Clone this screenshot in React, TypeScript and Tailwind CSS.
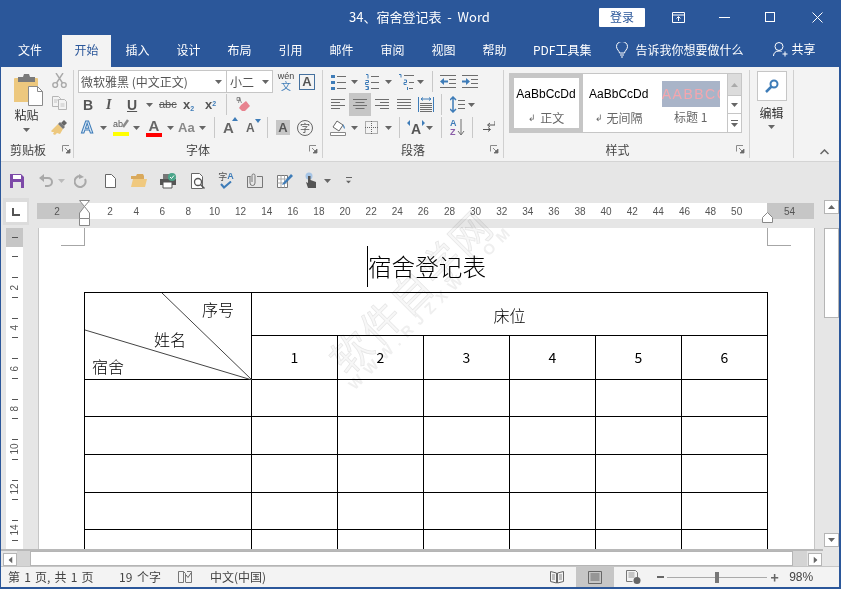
import type { ReactNode } from 'react'

const BLUE = '#3e7cb8'
const GR = '#6e6e6e'

function Caret({ className = '', color = '#666' }: { className?: string; color?: string }) {
  return (
    <svg width="7" height="4" viewBox="0 0 7 4" className={`shrink-0 ${className}`}>
      <path d="M0 0h7L3.5 4z" fill={color} />
    </svg>
  )
}

function Divider({ className = '' }: { className?: string }) {
  return <div className={`h-[21px] w-px shrink-0 bg-[#c8c8c8] ${className}`} />
}

function Launcher({ className = '' }: { className?: string }) {
  return (
    <svg width="9" height="9" viewBox="0 0 9 9" className={`absolute bottom-[4px] ${className}`}>
      <path d="M0.5 6.5V0.5H7" fill="none" stroke="#8a8a8a" />
      <path d="M3 3l4 4M8 4v4H4z" fill="#6a6a6a" stroke="#6a6a6a" strokeWidth="0.8" />
    </svg>
  )
}

function Ico({ w, h = 16, className = '', children }: { w: number; h?: number; className?: string; children: ReactNode }) {
  return (
    <svg width={w} height={h} viewBox={`0 0 ${w} ${h}`} className={`shrink-0 ${className}`} fill="none">
      {children}
    </svg>
  )
}

function BulletIcon() {
  return (
    <Ico w={15} h={16} className="ml-[8px]">
      <path d="M0 1h4v3H0zM0 7h4v3H0zM0 13h4v3H0z" fill={BLUE} />
      <path d="M6 2.5h9M6 8.5h9M6 14.5h9" stroke={GR} />
    </Ico>
  )
}

function NumberIcon() {
  return (
    <Ico w={14} h={16} className="ml-[7px]">
      <path d="M1 0.5h2v4M0.5 6.5h3v2h-3v2h3M0.5 12.5h3v3h-3M2 14h1" stroke={BLUE} strokeWidth="1" />
      <path d="M6 2.5h8M6 8.5h8M6 14.5h8" stroke={GR} />
    </Ico>
  )
}

function MultiIcon() {
  return (
    <Ico w={16} h={16} className="ml-[6px]">
      <path d="M1 0.5h2v3M6 6h2.5v2.5H6v2h2.5M9.5 13v3" stroke={BLUE} />
      <path d="M6 1.5h10M11 8.5h5M11 14.5h4" stroke={GR} />
    </Ico>
  )
}

function IndentIcon({ out, className = '' }: { out?: boolean; className?: string }) {
  return (
    <Ico w={16} h={14} className={className}>
      <path d="M0 0.5h16M9 4.5h7M9 8.5h7M0 12.5h16" stroke={GR} />
      {out ? <path d="M0 6.5l4-3.5v2.5h4v2H4v2.5z" fill={BLUE} /> : <path d="M8 6.5L4 3v2.5H0v2h4V10z" fill={BLUE} />}
    </Ico>
  )
}

function AlignIcon({ lines, className = '' }: { lines: string; className?: string }) {
  return (
    <Ico w={14} h={11} className={className}>
      <path d={lines} stroke={GR} />
    </Ico>
  )
}

function ARaise({ up, small, className = '' }: { up?: boolean; small?: boolean; className?: string }) {
  return (
    <span className={`relative flex w-[14px] shrink-0 items-end justify-start font-['Liberation_Sans',sans-serif] font-bold leading-none text-[#666] ${small ? 'text-[12px]' : 'text-[15px]'} ${className}`}>
      A
      <svg width="6" height="4" viewBox="0 0 6 4" className="absolute right-[-1px] top-[-3px]">
        <path d={up ? 'M0 4h6L3 0z' : 'M0 0h6L3 4z'} fill={BLUE} />
      </svg>
    </span>
  )
}

function Clipboard() {
  return (
    <Ico w={29} h={32}>
      <path d="M0 5a1 1 0 0 1 1-1h22a1 1 0 0 1 1 1v23H0z" fill="#edc87e" />
      <path d="M4 3h5l1-3h5l1 3h5v5H4z" fill="#7a7a7a" />
      <path d="M14.5 12.5h9l5 5v14h-14z" fill="#fff" stroke="#8a8a8a" />
      <path d="M23.5 12.5v5h5" stroke="#8a8a8a" />
    </Ico>
  )
}

function Scissors() {
  return (
    <Ico w={15} h={15}>
      <circle cx="3.2" cy="12" r="2.4" stroke="#a9a9a9" strokeWidth="1.4" />
      <circle cx="11.8" cy="12" r="2.4" stroke="#a9a9a9" strokeWidth="1.4" />
      <path d="M4.5 10L11 0M10.5 10L4 0" stroke="#a9a9a9" strokeWidth="1.4" />
    </Ico>
  )
}

function CopyIcon() {
  return (
    <Ico w={15} h={14}>
      <path d="M0.5 0.5h6l2 2v8h-8z" fill="#f3f3f3" stroke="#b5b5b5" />
      <path d="M6.5 3.5h6l2 2v8h-8z" fill="#f3f3f3" stroke="#b5b5b5" />
      <path d="M2 4h4M2 6h3M8.5 8h4M8.5 10h4" stroke="#c4c4c4" />
    </Ico>
  )
}

function Brush() {
  return (
    <Ico w={16} h={15}>
      <path d="M0 11L7 4l5 5-3 5-3-1-2 2-2-1 1-2-2 0z" fill="#edc87e" />
      <path d="M7 4l2-2 5 5-2 2z" fill="#777" />
      <path d="M10 3l3-3 3 3-3 3z" fill="#666" />
    </Ico>
  )
}

const rulerNumbers = Array.from({ length: 25 }, (_, i) => (i + 1) * 2)
const vRulerNumbers = [2, 4, 6, 8, 10, 12, 14]

function RibbonLabel({ children, className = '' }: { children: ReactNode; className?: string }) {
  return <div className={`pt-[3px] text-center text-[12px] leading-[16px] text-[#444] ${className}`}>{children}</div>
}

function Ribbon() {
  return (
    <div className="flex h-[94px] shrink-0 bg-[#f3f3f3] pt-[3px]">
      {/* clipboard */}
      <div className="relative flex h-[88px] w-[73px] shrink-0 flex-col border-r border-[#d0d0d0]">
        <div className="flex h-[69px]">
          <div className="ml-[2px] flex w-[47px] flex-col items-center pt-[4px]">
            <div className="ml-[3px]"><Clipboard /></div>
            <span className="text-[12px] leading-[18px] text-[#333]">粘贴</span>
            <Caret className="mt-[4px]" />
          </div>
          <div className="flex w-[18px] flex-col items-center gap-[8px] pt-[3px]">
            <Scissors />
            <CopyIcon />
            <div className="mt-[2px]"><Brush /></div>
          </div>
        </div>
        <RibbonLabel className="pr-[18px]">剪贴板</RibbonLabel>
        <Launcher className="left-[61px]" />
      </div>

      {/* font */}
      <div className="relative flex h-[88px] w-[249px] shrink-0 flex-col border-r border-[#d0d0d0]">
        <div className="flex h-[23px] items-center">
          <div className="ml-[4px] flex h-[23px] w-[195px] border border-[#c6c6c6] bg-white text-[12px] text-[#555]">
            <div className="flex w-[148px] items-center justify-between border-r border-[#c6c6c6] pl-[2px] pr-[4px]">
              <span>微软雅黑 (中文正文)</span>
              <Caret />
            </div>
            <div className="flex flex-1 items-center justify-between pl-[3px] pr-[3px]">
              <span>小二</span>
              <Caret />
            </div>
          </div>
          <div className="ml-[5px] flex w-[16px] flex-col items-center text-[9px] leading-[9px] text-[#444]">
            <span className="font-['Liberation_Sans',sans-serif]">wén</span>
            <span className="text-[10px] leading-[10px] text-[#3e7cb8]">文</span>
          </div>
          <div className="ml-[5px] flex h-[16px] w-[16px] items-center justify-center border border-[#44709e] font-['Liberation_Sans',sans-serif] text-[13px] font-bold leading-none text-[#555]">A</div>
        </div>

        <div className="flex h-[23px] items-center font-['Liberation_Sans',sans-serif] text-[#555]">
          <span className="ml-[9px] w-[10px] text-[14px] font-bold leading-none">B</span>
          <span className="ml-[13px] w-[8px] font-['Liberation_Serif',serif] text-[14px] font-bold italic leading-none">I</span>
          <span className="ml-[13px] w-[10px] text-[14px] font-bold leading-none underline">U</span>
          <Caret className="ml-[9px]" />
          <span className="ml-[6px] w-[16px] text-[11px] leading-none line-through">abc</span>
          <span className="ml-[8px] w-[12px] text-[13px] font-bold leading-none">x<sub className="text-[7px] text-[#3e7cb8]">2</sub></span>
          <span className="ml-[10px] w-[12px] text-[13px] font-bold leading-none">x<sup className="text-[7px] text-[#3e7cb8]">2</sup></span>
          <Divider className="ml-[9px]" />
          <Ico w={14} h={16} className="ml-[9px]">
            <path d="M5 8l5-4 4 5-5 5H6l-3-3z" fill="#e8838f" />
            <path d="M1 0.5h3v3H1zM2.5 6l1-5 2 5" stroke="#777" strokeWidth="0.8" />
          </Ico>
        </div>

        <div className="flex h-[23px] items-center font-['Liberation_Sans',sans-serif] text-[#666]">
          <span className="ml-[7px] w-[16px] text-[17px] font-bold leading-none text-[#dce9f6] [-webkit-text-stroke:1px_#3e7cb8]">A</span>
          <Caret className="ml-[3px]" />
          <div className="ml-[6px] flex w-[16px] flex-col">
            <div className="flex h-[13px] items-start">
              <span className="text-[9px] leading-[10px] text-[#555]">ab</span>
              <Ico w={7} h={11} className="ml-[-1px]">
                <path d="M1 8L6 1" stroke="#8a8a8a" strokeWidth="2.500" />
              </Ico>
            </div>
            <div className="h-[4px] w-[16px] bg-[#ffff00]" />
          </div>
          <Caret className="ml-[4px]" />
          <div className="ml-[6px] flex w-[16px] flex-col items-center">
            <span className="text-[15px] font-bold leading-[13px] text-[#666]">A</span>
            <div className="mt-[1px] h-[4px] w-[16px] bg-[#ff0000]" />
          </div>
          <Caret className="ml-[5px]" />
          <span className="ml-[4px] w-[20px] text-[13px] font-bold leading-none text-[#888]">Aa</span>
          <Caret className="ml-px" />
          <Divider className="ml-[8px]" />
          <ARaise up className="ml-[8px]" />
          <ARaise small className="ml-[9px]" />
          <Divider className="ml-[7px]" />
          <span className="ml-[8px] flex h-[15px] w-[14px] items-center justify-center bg-[#c6c6c6] text-[13px] font-bold leading-none text-[#555]">A</span>
          <span className="ml-[7px] flex h-[16px] w-[16px] items-center justify-center rounded-full border border-[#666] font-['Noto_Sans_CJK_SC',sans-serif] text-[10px] leading-none text-[#555]">字</span>
        </div>
        <RibbonLabel>字体</RibbonLabel>
        <Launcher className="right-[4px]" />
      </div>

      {/* paragraph */}
      <div className="relative flex h-[88px] w-[181px] shrink-0 flex-col border-r border-[#d0d0d0]">
        <div className="flex h-[23px] items-center">
          <BulletIcon />
          <Caret className="ml-[5px]" />
          <NumberIcon />
          <Caret className="ml-[6px]" />
          <MultiIcon />
          <Caret className="ml-[3px]" />
          <Divider className="ml-[8px]" />
          <IndentIcon out className="ml-[7px]" />
          <IndentIcon className="ml-[6px]" />
        </div>
        <div className="flex h-[23px] items-center">
          <AlignIcon lines="M0 .5h14M0 3.5h9M0 6.5h14M0 9.5h9" className="ml-[8px]" />
          <div className="ml-[4px] flex h-[23px] w-[22px] items-center justify-center bg-[#c6c6c6]">
            <AlignIcon lines="M0 .5h14M2.5 3.5h9M0 6.5h14M2.5 9.5h9" />
          </div>
          <AlignIcon lines="M0 .5h14M5 3.5h9M0 6.5h14M5 9.5h9" className="ml-[4px]" />
          <AlignIcon lines="M0 .5h14M0 3.5h14M0 6.5h14M0 9.5h14" className="ml-[8px]" />
          <Ico w={16} h={15} className="ml-[7px]">
            <path d="M0.5 0v15M15.5 0v15" stroke={BLUE} />
            <path d="M3 2h10M5 0.5L3 2l2 1.5M11 0.5L13 2l-2 1.5" stroke={BLUE} />
            <path d="M2 6.5h12M2 8.5h12M2 10.5h12M2 12.5h12M2 14.5h12" stroke={GR} />
          </Ico>
          <Divider className="ml-[7px]" />
          <Ico w={15} h={17} className="ml-[8px]">
            <path d="M3 1v15M0 4l3-3 3 3M0 13l3 3 3-3" stroke={BLUE} strokeWidth="1.5" />
            <path d="M8 4.5h7M8 8.5h7M8 12.5h7" stroke={GR} />
          </Ico>
          <Caret className="ml-[3px]" />
        </div>
        <div className="flex h-[23px] items-center">
          <Ico w={16} h={17} className="ml-[7px]">
            <path d="M3 8l4-6 6 4-4 6z" fill="#fff" stroke="#666" />
            <path d="M13 5c1 2 2.500 3 1.500 5-.8-1-1.500-2-1.500-5z" fill={BLUE} />
            <path d="M0.500 13.500h15v3h-15z" fill="#fff" stroke="#888" />
          </Ico>
          <Caret className="ml-[5px]" />
          <Ico w={13} h={13} className="ml-[7px]">
            <path d="M0.500 0.500h12v12h-12zM6.500 0v13M0 6.500h13" stroke="#666" strokeDasharray="1 1" />
          </Ico>
          <Caret className="ml-[7px]" />
          <Divider className="ml-[7px]" />
          <div className="relative ml-[7px] flex h-[16px] w-[18px] shrink-0 items-end justify-center font-['Liberation_Sans',sans-serif] text-[14px] font-bold leading-none text-[#555]">
            A
            <svg width="18" height="6" viewBox="0 0 18 6" className="absolute left-0 top-0">
              <path d="M0 3l3-3v6zM18 3l-3-3v6z" fill={BLUE} />
            </svg>
          </div>
          <Caret className="ml-px" />
          <Divider className="ml-[8px]" />
          <div className="ml-[8px] flex w-[16px] shrink-0 items-center">
            <div className="flex flex-col font-['Liberation_Sans',sans-serif] text-[9px] font-bold leading-[9px]">
              <span className="text-[#3e7cb8]">A</span>
              <span className="text-[#8a5ca8]">Z</span>
            </div>
            <Ico w={8} h={17}>
              <path d="M4 0v15M1 12l3 4 3-4" stroke={GR} />
            </Ico>
          </div>
          <Divider className="ml-[6px]" />
          <Ico w={12} h={13} className="ml-[10px]">
            <path d="M12 0v4H5M7 2L4.500 4 7 6" stroke="#555" />
            <path d="M0 8.500h7M5 6.500l2.500 2L5 10.500" stroke="#555" />
          </Ico>
        </div>
        <RibbonLabel>段落</RibbonLabel>
        <Launcher className="right-[4px]" />
      </div>

      {/* styles */}
      <div className="relative flex h-[88px] w-[246px] shrink-0 flex-col border-r border-[#d0d0d0]">
        <div className="h-[69px] pl-[5px] pt-[3px]">
          <div className="flex h-[60px] w-[233px] border border-[#c6c6c6] bg-white text-[#666]">
            <div className="flex w-[73px] flex-col items-center overflow-hidden border-[4px] border-[#c6c6c6] bg-white">
              <span className="mt-[9px] w-[60px] overflow-hidden whitespace-nowrap font-['Liberation_Sans',sans-serif] text-[12px] leading-[14px] text-black">AaBbCcDdE</span>
              <span className="mt-[9px] flex items-center gap-[4px] text-[12px] leading-[16px]"><span className="text-[9px]">↲</span>正文</span>
            </div>
            <div className="flex w-[72px] flex-col items-center overflow-hidden">
              <span className="mt-[13px] w-[59px] overflow-hidden whitespace-nowrap font-['Liberation_Sans',sans-serif] text-[12px] leading-[14px] text-black">AaBbCcDdE</span>
              <span className="mt-[9px] flex items-center gap-[4px] text-[12px] leading-[16px]"><span className="text-[9px]">↲</span>无间隔</span>
            </div>
            <div className="flex w-[73px] flex-col items-center overflow-hidden">
              <span className="mt-[7px] flex h-[26px] w-[58px] items-center overflow-hidden whitespace-nowrap bg-[#a9b4c8] font-['Liberation_Sans',sans-serif] text-[14px] tracking-[1.5px] text-[#f4a6ae]">AABBCCI</span>
              <span className="mt-[2px] text-[12px] leading-[16px]">标题 1</span>
            </div>
            <div className="flex w-[14px] flex-col border-l border-[#c6c6c6]">
              <div className="flex h-[21px] items-center justify-center bg-[#dcdcdc]"><Caret className="rotate-180" color="#aaa" /></div>
              <div className="flex h-[19px] items-center justify-center border-y border-[#c6c6c6]"><Caret /></div>
              <div className="flex flex-1 flex-col items-center justify-center gap-[2px]"><div className="h-px w-[7px] bg-[#666]" /><Caret /></div>
            </div>
          </div>
        </div>
        <RibbonLabel className="pr-[18px]">样式</RibbonLabel>
        <Launcher className="right-[4px]" />
      </div>

      {/* edit */}
      <div className="flex h-[88px] w-[44px] shrink-0 flex-col items-center border-r border-[#d0d0d0]">
        <div className="mt-px flex h-[30px] w-[30px] items-center justify-center border border-[#c6c6c6] bg-white">
          <Ico w={14} h={14}>
            <circle cx="9" cy="5" r="3.500" stroke={BLUE} strokeWidth="2" />
            <path d="M6.500 7.500L1 13" stroke={BLUE} strokeWidth="2.500" />
          </Ico>
        </div>
        <span className="mt-[4px] text-[12px] leading-[16px] text-[#333]">编辑</span>
        <Caret className="mt-[4px]" />
      </div>

      <div className="flex h-[88px] flex-1 items-end justify-end pb-[3px] pr-[10px]">
        <Ico w={9} h={6}>
          <path d="M0.500 5L4.500 1l4 4" stroke="#666" strokeWidth="1.500" />
        </Ico>
      </div>
    </div>
  )
}

function QuickAccess() {
  return (
    <div className="flex h-[38px] shrink-0 items-center border-t border-[#d4d4d4] bg-[#e6e6e6] pl-[9px]">
      <Ico w={14} h={14}>
        <path d="M0 0h11l3 3v11H0z" fill="#7d4aa8" />
        <path d="M3 1h8v4H3z" fill="#fff" />
        <path d="M3 8h8v6H3z" fill="#e6e6e6" />
      </Ico>
      <Ico w={14} h={13} className="ml-[15px]">
        <path d="M1 4h8a4 4 0 0 1 0 8H6" stroke="#a9a9a9" strokeWidth="2" />
        <path d="M5 0L0 4l5 4z" fill="#a9a9a9" />
      </Ico>
      <Caret className="ml-[5px]" color="#bbb" />
      <Ico w={14} h={14} className="ml-[9px]">
        <path d="M11 5a5.500 5.500 0 1 1-5-3" stroke="#a9a9a9" strokeWidth="2" />
        <path d="M5 0v5l5-2z" fill="#a9a9a9" />
      </Ico>
      <Ico w={11} h={14} className="ml-[17px]">
        <path d="M.500.500h6l4 4v9h-10z" fill="#fff" stroke="#666" />
      </Ico>
      <Ico w={16} h={13} className="ml-[15px]">
        <path d="M0 2h5l1-2h6l1 2v3H0z" fill="#d9a95c" />
        <path d="M0 13l2-8h14l-2 8z" fill="#f0c97f" />
      </Ico>
      <Ico w={16} h={16} className="ml-[13px]">
        <path d="M0 6h16v6H0z" fill="#555" />
        <path d="M3 9h9v6H3z" fill="#fff" stroke="#555" />
        <path d="M3 1h6v5H3z" fill="#777" />
        <circle cx="12" cy="4" r="4" fill="#4ba58a" />
        <path d="M10 4l1.500 1.500L14 2.500" stroke="#fff" />
      </Ico>
      <Ico w={14} h={16} className="ml-[15px]">
        <path d="M.500.500h8l3 3v12h-11z" fill="#fff" stroke="#666" />
        <circle cx="7" cy="9" r="3.500" stroke="#555" strokeWidth="1.300" />
        <path d="M9.500 11.500L13.500 15.500" stroke="#555" strokeWidth="1.500" />
      </Ico>
      <div className="ml-[13px] flex w-[16px] shrink-0 flex-col items-center">
        <div className="flex text-[9px] leading-[9px] text-[#555]">
          <span>字</span>
          <span className="font-['Liberation_Sans',sans-serif] font-bold text-[#3e7cb8]">A</span>
        </div>
        <Ico w={16} h={8}>
          <path d="M3 3l3 3.500L13 .500" stroke={BLUE} strokeWidth="2" />
        </Ico>
      </div>
      <Ico w={16} h={15} className="ml-[13px]">
        <path d="M0.500 3.500h3M10 3.500h5.500v11H.500v-11" stroke="#777" />
        <path d="M5 9V2.500a1.500 1.500 0 0 1 3 0V10a2.500 2.500 0 0 1-5 0V3" stroke="#777" />
      </Ico>
      <Ico w={16} h={15} className="ml-[14px]">
        <path d="M.500 2.500h10v12h-10z" fill="#fff" stroke="#777" />
        <path d="M.500 6h10M.500 10h10M4 2.500v12M7.500 2.500v12" stroke="#aaa" />
        <path d="M6 10L14 1l2 2-8 8-3 1z" fill={BLUE} />
      </Ico>
      <Ico w={13} h={17} className="ml-[11px]">
        <circle cx="5" cy="4" r="3.500" fill="#a6c5e6" />
        <path d="M4 4v7l-2-1 2 6h8v-6L6.500 8V4z" fill="#555" />
      </Ico>
      <Caret className="ml-[7px]" />
      <div className="ml-[14px] flex flex-col items-center gap-[2px]">
        <div className="h-px w-[6px] bg-[#666]" />
        <Caret className="scale-75" />
      </div>
    </div>
  )
}

function HRuler() {
  return (
    <div className="relative flex h-[29px] shrink-0 items-start bg-[#e6e6e6] text-[10px] text-[#555]">
      <div className="ml-[2px] mt-[-1px] flex h-[27px] w-[26px] items-center justify-center bg-[#dcdcdc]">
        <div className="flex h-[20px] w-[21px] items-center justify-center bg-white">
          <div className="h-[8px] w-[8px] border-b-2 border-l-2 border-[#555]" />
        </div>
      </div>
      <div className="ml-[8px] mt-[4px] flex h-[16px] font-['Liberation_Sans',sans-serif]">
        <div className="flex w-[47px] items-center justify-center bg-[#c6c6c6] pr-[7px]">2</div>
        <div className="flex w-[683px] items-center bg-white pl-[13px]">
          {rulerNumbers.map((n) => (
            <span key={n} className="w-[26.12px] shrink-0 text-center">{n}</span>
          ))}
        </div>
        <div className="flex w-[47px] items-center justify-center bg-[#c6c6c6] pr-[2px]">54</div>
      </div>
      {/* indent markers */}
      <svg width="12" height="28" viewBox="0 0 12 28" className="absolute left-[78px] top-[1px]">
        <path d="M.500.500h10L5.500 6.500l5 6.500v5.500h-10V13l5-6.500z" fill="#fff" stroke="#888" />
        <path d="M.500 18.500h10v7h-10z" fill="#fff" stroke="#888" />
      </svg>
      <svg width="12" height="11" viewBox="0 0 12 11" className="absolute left-[761px] top-[13px]">
        <path d="M.500 5.500l5-5 5 5v5h-10z" fill="#fff" stroke="#888" />
      </svg>
    </div>
  )
}

function VRuler() {
  return (
    <div className="ml-[5px] flex h-full w-[17px] shrink-0 flex-col items-center overflow-hidden bg-white font-['Liberation_Sans',sans-serif] text-[10px] text-[#555]">
      <div className="flex h-[19px] w-full shrink-0 items-center justify-center bg-[#c6c6c6]">
        <div className="h-px w-[6px] bg-[#555]" />
      </div>
      <div className="mt-[9px] h-px w-[6px] shrink-0 bg-[#555]" />
      {vRulerNumbers.map((n) => (
        <div key={n} className="flex h-[40.5px] shrink-0 flex-col items-center">
          <div className="mt-[20px] h-px w-[6px] bg-[#555]" />
          <span className="flex h-[19px] rotate-180 items-center justify-center leading-none [writing-mode:vertical-rl]">{n}</span>
          <div className="h-px w-[6px] bg-[#555]" />
        </div>
      ))}
    </div>
  )
}

function DocTable() {
  const rows = ['h-[37px]', 'h-[38px]', 'h-[38px]', 'h-[37px]', 'h-[38px]']
  return (
    <table className="w-[683px] table-fixed border-collapse text-black">
      <colgroup>
        <col className="w-[167px]" />
        <col className="w-[86px]" />
        <col className="w-[86px]" />
        <col className="w-[86px]" />
        <col className="w-[86px]" />
        <col className="w-[86px]" />
        <col className="w-[86px]" />
      </colgroup>
      <tbody>
        <tr className="h-[43px]">
          <td rowSpan={2} className="relative border border-black p-0">
            <svg width="167" height="87" viewBox="0 0 167 87" className="absolute left-0 top-0">
              <path d="M77 0L167 87M0 37L167 87" stroke="#444" />
            </svg>
            <span className="absolute left-[117px] top-[5px] text-[16px] font-light leading-[22px]">序号</span>
            <span className="absolute left-[69px] top-[35px] text-[16px] font-light leading-[22px]">姓名</span>
            <span className="absolute left-[7px] top-[62px] text-[16px] font-light leading-[22px]">宿舍</span>
          </td>
          <td colSpan={6} className="border border-black p-0 pt-[2px] text-center text-[16px] font-light">床位</td>
        </tr>
        <tr className="h-[44px]">
          {[1, 2, 3, 4, 5, 6].map((n) => (
            <td key={n} className="border border-black p-0 text-center text-[14px]">{n}</td>
          ))}
        </tr>
        {rows.map((h, i) => (
          <tr key={i} className={h}>
            {[0, 1, 2, 3, 4, 5, 6].map((c) => (
              <td key={c} className="border border-black p-0" />
            ))}
          </tr>
        ))}
      </tbody>
    </table>
  )
}

function Page() {
  return (
    <div className="relative ml-[15px] h-full w-[777px] shrink-0 overflow-hidden border-x border-[#c6c6c6] bg-white">
      <div className="absolute left-[22px] top-0 h-[18px] w-[24px] border-b border-r border-[#a6a6a6]" />
      <div className="absolute left-[728px] top-0 h-[18px] w-[24px] border-b border-l border-[#a6a6a6]" />
      <div className="flex flex-col pl-[45px] pt-[18px]">
        <div className="flex h-[41px] w-[683px] justify-center">
          <span className="ml-[2px] flex h-[41px] items-center border-l border-black text-[23.6px] font-light leading-none text-black">宿舍登记表</span>
        </div>
        <div className="mt-[5px]">
          <DocTable />
        </div>
      </div>
    </div>
  )
}

function VScroll() {
  return (
    <div className="ml-[9px] flex h-full w-[15px] shrink-0 flex-col bg-[#e6e6e6] pt-px">
      <div className="flex h-[14px] items-center justify-center border border-[#b5b5b5] bg-white"><Caret className="rotate-180" /></div>
      <div className="mt-[14px] h-[90px] border border-[#b5b5b5] bg-white" />
      <div className="flex-1" />
      <div className="mb-[2px] flex h-[14px] items-center justify-center border border-[#b5b5b5] bg-white"><Caret /></div>
    </div>
  )
}

function HScroll() {
  return (
    <div className="h-[17px] shrink-0 bg-[#e6e6e6]">
      <div className="flex h-[17px] w-[822px] items-start border-t-2 border-[#b8b8b8]">
        <div className="ml-[2px] mt-[2px] flex h-[13px] w-[14px] items-center justify-center border border-[#b5b5b5] bg-white">
          <Caret className="rotate-90" />
        </div>
        <div className="h-[15px] w-[13px] bg-[#d4d4d4]" />
        <div className="h-[15px] w-[763px] border border-[#b5b5b5] bg-white" />
        <div className="h-[15px] w-[14px] bg-[#d4d4d4]" />
        <div className="ml-px mt-[2px] flex h-[13px] w-[14px] items-center justify-center border border-[#b5b5b5] bg-white">
          <Caret className="-rotate-90" />
        </div>
      </div>
    </div>
  )
}

function StatusBar() {
  return (
    <div className="flex h-[21px] shrink-0 items-center border-t border-[#c6c6c6] bg-[#f3f3f3] text-[12px] text-[#444]">
      <span className="ml-[7px] w-[111px] whitespace-nowrap [word-spacing:1.5px]">第 1 页, 共 1 页</span>
      <span className="w-[59px] whitespace-nowrap [word-spacing:2px]">19 个字</span>
      <Ico w={14} h={14}>
        <path d="M.500 1.500h5v11h-5zM5.500 1.500l2 2v9M9 1.500h4.500v11H8" stroke="#777" />
        <path d="M8 5l2 2.500L13 3" stroke="#666" />
      </Ico>
      <span className="ml-[18px] whitespace-nowrap">中文(中国)</span>
      <div className="ml-[284px]">
        <Ico w={14} h={14}>
          <path d="M.500 1.500l6 1.500v10l-6-1.500zM13.500 1.500l-6 1.500v10l6-1.500z" stroke="#666" />
          <path d="M2 5h3M2 7h3M2 9h3M9 5h3M9 7h3M9 9h3" stroke="#888" />
        </Ico>
      </div>
      <div className="ml-[12px] flex h-[20px] w-[38px] items-center justify-center bg-[#c6c6c6]">
        <Ico w={14} h={13}>
          <path d="M.500.500h13v12h-13z" stroke="#666" />
          <path d="M2.500 3h9M2.500 5h9M2.500 7h9M2.500 9h9" stroke="#666" />
        </Ico>
      </div>
      <Ico w={15} h={14} className="ml-[12px]">
        <path d="M.500.500h9l2 2v6M.500.500v11h6" stroke="#777" />
        <path d="M2.500 3h6M2.500 5h6M2.500 7h6" stroke="#999" />
        <circle cx="11" cy="10.500" r="3.500" fill="#666" />
      </Ico>
      <div className="ml-[16px] h-[2px] w-[7px] bg-[#666]" />
      <div className="relative ml-[3px] h-px w-[100px] bg-[#aaa]">
        <div className="absolute left-[48px] top-[-5px] h-[11px] w-[4px] bg-[#777]" />
      </div>
      <span className="ml-[3px] flex h-[9px] w-[9px] items-center justify-center text-[14px] font-bold leading-none text-[#666]">+</span>
      <span className="ml-[10px] font-['Liberation_Sans',sans-serif] text-[12px]">98%</span>
    </div>
  )
}

export default function App() {
  const tabs = ['插入', '设计', '布局', '引用', '邮件', '审阅', '视图', '帮助']

  return (
    <div className="relative flex h-[589px] w-[841px] flex-col overflow-hidden border-b-2 border-l border-r-2 border-[#2b579a] bg-[#e6e6e6] font-['Noto_Sans_CJK_SC','Liberation_Sans',sans-serif]">
      {/* title bar */}
      <div className="flex h-[34px] shrink-0 items-center bg-[#2b579a] text-white">
        <span className="ml-[348px] whitespace-pre text-[13px]">34、宿舍登记表  -  Word</span>
        <div className="ml-auto flex items-center">
          <button className="flex h-[19px] w-[46px] items-center justify-center rounded-[1px] bg-white text-[12px] text-[#2b579a]">登录</button>
          <div className="flex w-[56px] justify-center pl-[10px]">
            <Ico w={13} h={11}>
              <path d="M.500.500h12v10H.500zM.500 3h12" stroke="#fff" />
              <path d="M6.500 9V5M4.500 6.500l2-2 2 2" stroke="#fff" />
            </Ico>
          </div>
          <div className="flex w-[46px] justify-center">
            <div className="h-px w-[11px] bg-white" />
          </div>
          <div className="flex w-[46px] justify-center">
            <div className="h-[10px] w-[10px] border border-white" />
          </div>
          <div className="flex w-[46px] justify-center pl-[3px]">
            <Ico w={11} h={11}>
              <path d="M.500.500l10 10M10.500.500l-10 10" stroke="#fff" />
            </Ico>
          </div>
        </div>
      </div>

      {/* tabs */}
      <div className="flex h-[33px] shrink-0 items-end bg-[#2b579a] text-[12px] text-white">
        <div className="flex h-[32px] w-[58px] items-center justify-center pb-[2px]">文件</div>
        <div className="ml-[3px] flex h-[32px] w-[49px] items-center justify-center bg-[#f3f3f3] pb-[2px] text-[#2b579a]">开始</div>
        <div className="ml-px flex">
          {tabs.map((t) => (
            <div key={t} className="flex h-[32px] w-[51px] items-center justify-center pb-[2px]">{t}</div>
          ))}
        </div>
        <div className="ml-[13px] flex h-[32px] items-center whitespace-nowrap pb-[2px]">PDF工具集</div>
        <div className="ml-[25px] flex h-[32px] items-center whitespace-nowrap pb-[2px]">
          <Ico w={12} h={17} className="mr-[7px]">
            <path d="M3.500 11c0-2-3-3.500-3-6.500a5.500 5 0 0 1 11 0c0 3-3 4.500-3 6.500zM4 13h4M5 15h2" stroke="#fff" />
          </Ico>
          告诉我你想要做什么
        </div>
        <div className="ml-[29px] flex h-[32px] items-center whitespace-nowrap pb-[4px]">
          <Ico w={15} h={15} className="mr-[4px]">
            <circle cx="6" cy="4.500" r="4" stroke="#fff" />
            <path d="M.500 14c0-3 2-5 5.500-5 1 0 2 .200 2.500.500M12 9.500v5M9.500 12h5" stroke="#fff" />
          </Ico>
          共享
        </div>
      </div>

      <Ribbon />
      <QuickAccess />

      <div className="flex min-h-0 flex-1">
        <div className="flex w-[814px] shrink-0 flex-col">
          <HRuler />
          <div className="flex min-h-0 flex-1">
            <VRuler />
            <Page />
          </div>
        </div>
        <VScroll />
      </div>

      <HScroll />
      <StatusBar />

      {/* watermark */}
      <div className="pointer-events-none absolute left-[409px] top-[291px] flex h-0 w-0 -rotate-45 items-center justify-center mix-blend-multiply">
        <span className="whitespace-nowrap text-[40px] font-normal leading-none tracking-[2px] text-[#f7f7f7] [-webkit-text-stroke:0.7px_#e6e6e6]">软件自学网</span>
      </div>
      <div className="pointer-events-none absolute left-[430px] top-[306px] flex h-0 w-0 -rotate-45 items-center justify-center mix-blend-multiply">
        <span className="whitespace-nowrap font-['Liberation_Sans',sans-serif] text-[15px] font-bold leading-none tracking-[7px] text-[#efefef]">WWW.RJZXW.COM</span>
      </div>
    </div>
  )
}
